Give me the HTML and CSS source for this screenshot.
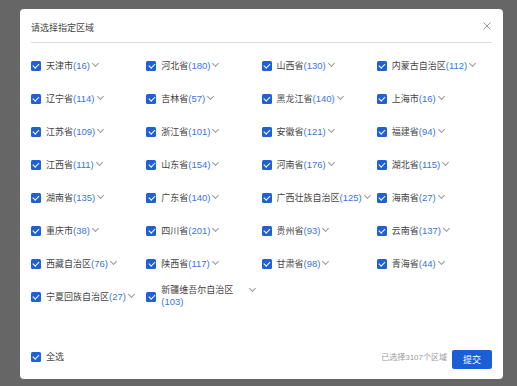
FILE: index.html
```html
<!DOCTYPE html>
<html lang="zh-CN">
<head>
    <meta charset="UTF-8">
    <meta name="viewport" content="width=device-width, initial-scale=1.0">
    <title>选择区域</title>
    <link rel="stylesheet" href="styles.css">
</head>
<body>

    <div class="modal">
        <div class="modal-header">
            <h2 class="modal-title">请选择指定区域</h2>
            <svg class="modal-close" width="8" height="8" viewBox="0 0 8 8">
                <path d="M0.5 0.5 L7.5 7.5 M7.5 0.5 L0.5 7.5" stroke="#9a9a9a" stroke-width="1" fill="none"/>
            </svg>
        </div>

        <div class="region-grid">
            <label class="region"><span class="check"></span><span class="region-name">天津市<em>(16)</em></span><span class="arrow"></span></label>
            <label class="region"><span class="check"></span><span class="region-name">河北省<em>(180)</em></span><span class="arrow"></span></label>
            <label class="region"><span class="check"></span><span class="region-name">山西省<em>(130)</em></span><span class="arrow"></span></label>
            <label class="region"><span class="check"></span><span class="region-name">内蒙古自治区<em>(112)</em></span><span class="arrow"></span></label>

            <label class="region"><span class="check"></span><span class="region-name">辽宁省<em>(114)</em></span><span class="arrow"></span></label>
            <label class="region"><span class="check"></span><span class="region-name">吉林省<em>(57)</em></span><span class="arrow"></span></label>
            <label class="region"><span class="check"></span><span class="region-name">黑龙江省<em>(140)</em></span><span class="arrow"></span></label>
            <label class="region"><span class="check"></span><span class="region-name">上海市<em>(16)</em></span><span class="arrow"></span></label>

            <label class="region"><span class="check"></span><span class="region-name">江苏省<em>(109)</em></span><span class="arrow"></span></label>
            <label class="region"><span class="check"></span><span class="region-name">浙江省<em>(101)</em></span><span class="arrow"></span></label>
            <label class="region"><span class="check"></span><span class="region-name">安徽省<em>(121)</em></span><span class="arrow"></span></label>
            <label class="region"><span class="check"></span><span class="region-name">福建省<em>(94)</em></span><span class="arrow"></span></label>

            <label class="region"><span class="check"></span><span class="region-name">江西省<em>(111)</em></span><span class="arrow"></span></label>
            <label class="region"><span class="check"></span><span class="region-name">山东省<em>(154)</em></span><span class="arrow"></span></label>
            <label class="region"><span class="check"></span><span class="region-name">河南省<em>(176)</em></span><span class="arrow"></span></label>
            <label class="region"><span class="check"></span><span class="region-name">湖北省<em>(115)</em></span><span class="arrow"></span></label>

            <label class="region"><span class="check"></span><span class="region-name">湖南省<em>(135)</em></span><span class="arrow"></span></label>
            <label class="region"><span class="check"></span><span class="region-name">广东省<em>(140)</em></span><span class="arrow"></span></label>
            <label class="region"><span class="check"></span><span class="region-name">广西壮族自治区<em>(125)</em></span><span class="arrow"></span></label>
            <label class="region"><span class="check"></span><span class="region-name">海南省<em>(27)</em></span><span class="arrow"></span></label>

            <label class="region"><span class="check"></span><span class="region-name">重庆市<em>(38)</em></span><span class="arrow"></span></label>
            <label class="region"><span class="check"></span><span class="region-name">四川省<em>(201)</em></span><span class="arrow"></span></label>
            <label class="region"><span class="check"></span><span class="region-name">贵州省<em>(93)</em></span><span class="arrow"></span></label>
            <label class="region"><span class="check"></span><span class="region-name">云南省<em>(137)</em></span><span class="arrow"></span></label>

            <label class="region"><span class="check"></span><span class="region-name">西藏自治区<em>(76)</em></span><span class="arrow"></span></label>
            <label class="region"><span class="check"></span><span class="region-name">陕西省<em>(117)</em></span><span class="arrow"></span></label>
            <label class="region"><span class="check"></span><span class="region-name">甘肃省<em>(98)</em></span><span class="arrow"></span></label>
            <label class="region"><span class="check"></span><span class="region-name">青海省<em>(44)</em></span><span class="arrow"></span></label>

            <label class="region"><span class="check"></span><span class="region-name">宁夏回族自治区<em>(27)</em></span><span class="arrow"></span></label>
            <label class="region region-wide"><span class="check"></span><span class="region-name">新疆维吾尔自治区<em>(103)</em></span><span class="arrow"></span></label>
        </div>

        <div class="modal-footer">
            <label class="check-all"><span class="check"></span>全选</label>
            <span class="selected-count">已选择3107个区域</span>
            <button type="button" class="submit-btn">提交</button>
        </div>
    </div>

</body>
</html>
```

FILE: styles.css
```css
body {
    font-family: 'Liberation Sans', 'Noto Sans CJK SC', sans-serif;
    background-color: #666;
    color: #444;
    margin: 0;
    padding: 9px 14px 7px 20px;
}

.modal {
    background-color: #fff;
    width: 483px;
    height: 370px;
    border-radius: 4px;
    display: flex;
    flex-direction: column;
}

.modal-header {
    margin: 0 11px;
    padding-top: 3px;
    height: 30px;
    border-bottom: 1px solid #dcdcdc;
    display: flex;
    align-items: center;
    justify-content: space-between;
}

.modal-title {
    margin: 0;
    font-size: 9px;
    font-weight: normal;
    color: #444;
}

.modal-close {
    margin-right: 1px;
    margin-top: -2px;
}

.region-grid {
    margin: 6px 11px 0;
    display: grid;
    grid-template-columns: repeat(4, 1fr);
    grid-auto-rows: 33px;
    align-items: center;
}

.region {
    display: flex;
    align-items: center;
    font-size: 9px;
    line-height: 11px;
    color: #444;
}

.region-name {
    min-width: 0;
    max-width: 86px;
}

.region-name em {
    font-style: normal;
    font-size: 9.5px;
    color: #3a74de;
    white-space: nowrap;
}

.region-wide .region-name {
    flex: 1;
}

.check {
    flex: none;
    width: 10px;
    height: 10px;
    margin-right: 5px;
    border-radius: 1.5px;
    background-color: #1f61d4;
    display: inline-flex;
    align-items: center;
    justify-content: center;
}

.check::after {
    content: "";
    width: 2.5px;
    height: 5px;
    margin-top: -1.5px;
    border: solid #fff;
    border-width: 0 1.5px 1.5px 0;
    transform: rotate(45deg);
}

.arrow {
    flex: none;
    align-self: flex-start;
    width: 4px;
    height: 4px;
    margin: 1px 0 0 3px;
    border: solid #999;
    border-width: 0 1px 1px 0;
    transform: rotate(45deg);
}

.modal-footer {
    margin-top: auto;
    padding: 0 11px 10px;
    display: flex;
    align-items: center;
}

.check-all {
    display: flex;
    align-items: center;
    font-size: 9px;
    color: #444;
    margin-bottom: 6px;
}

.selected-count {
    margin-left: auto;
    margin-right: 5px;
    margin-bottom: 6px;
    font-size: 8px;
    color: #9a9a9a;
}

.submit-btn {
    width: 40px;
    height: 19px;
    padding: 0;
    border: none;
    border-radius: 2px;
    background-color: #1a5fd6;
    color: #fff;
    font-family: inherit;
    font-size: 9px;
}
```
